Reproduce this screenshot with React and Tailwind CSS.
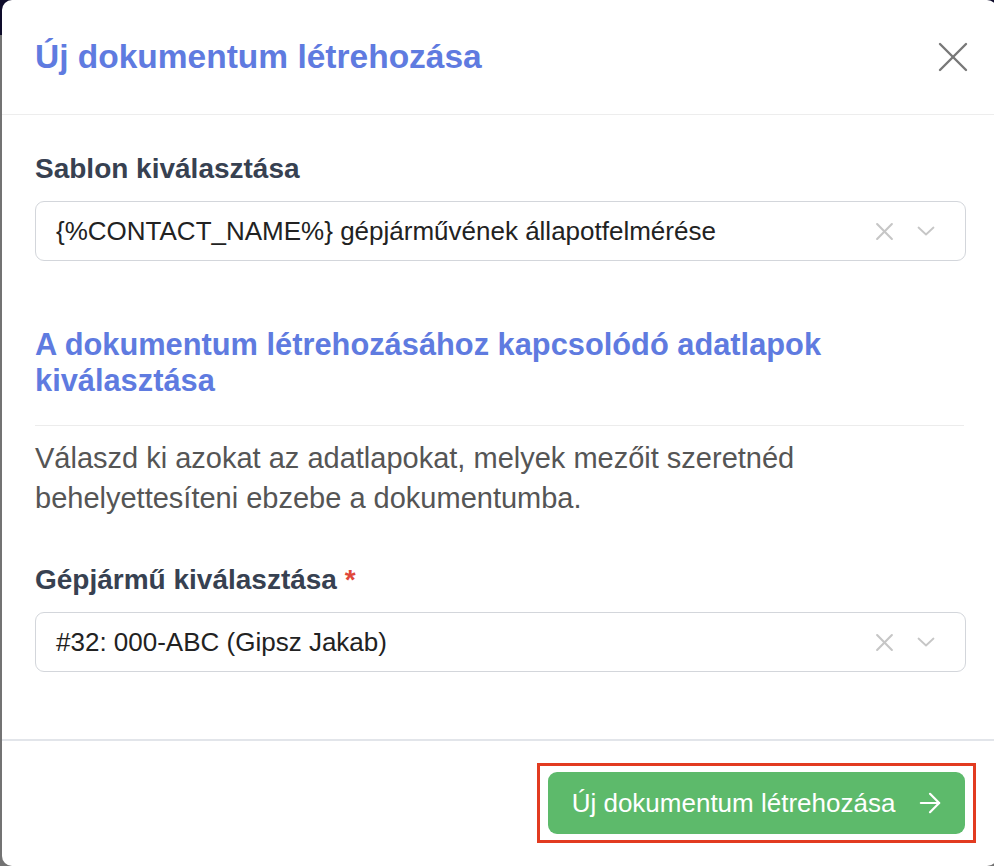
import React from "react";

const font = { fontFamily: '"Liberation Sans", Arial, sans-serif' };

function CloseIcon({ className }) {
  return (
    <svg viewBox="0 0 30 30" className={className} fill="none" stroke="currentColor" strokeWidth="2.4" strokeLinecap="round">
      <line x1="2" y1="2" x2="28" y2="28" />
      <line x1="28" y1="2" x2="2" y2="28" />
    </svg>
  );
}

function ClearIcon() {
  return (
    <svg viewBox="0 0 18 18" className="w-[19px] h-[19px] text-[#c6c6c6]" fill="none" stroke="currentColor" strokeWidth="2" strokeLinecap="round">
      <line x1="2" y1="2" x2="16" y2="16" />
      <line x1="16" y1="2" x2="2" y2="16" />
    </svg>
  );
}

function ChevronIcon() {
  return (
    <svg viewBox="0 0 18 10" className="w-[18px] h-[10px] text-[#c6c6c6]" fill="none" stroke="currentColor" strokeWidth="1.8" strokeLinecap="round" strokeLinejoin="round">
      <polyline points="1.5,1.5 9,8.5 16.5,1.5" />
    </svg>
  );
}

function ArrowIcon() {
  return (
    <svg viewBox="0 0 24 24" className="w-[22px] h-[22px]" fill="none" stroke="currentColor" strokeWidth="2.4" strokeLinecap="round" strokeLinejoin="round">
      <line x1="2" y1="12" x2="22" y2="12" />
      <polyline points="12,2 22,12 12,22" />
    </svg>
  );
}

function Select({ value }) {
  return (
    <div className="h-[60px] rounded-[9px] border border-[#d3d6db] bg-white flex items-center pl-[20px] pr-[30px]">
      <span className="flex-1 text-[26px] text-[#222] leading-[32px] whitespace-nowrap">{value}</span>
      <div className="flex items-center gap-[23px]">
        <ClearIcon />
        <ChevronIcon />
      </div>
    </div>
  );
}

export default function App() {
  return (
    <div
      className="w-[994px] h-[866px] overflow-hidden flex bg-[linear-gradient(to_bottom,#0e0c2b_35px,#737373_35px)]"
      style={font}
    >
      <div className="ml-[2px] w-[995px] shrink-0 h-full bg-white rounded-[10px] flex flex-col">
        {/* header */}
        <div className="h-[115px] shrink-0 flex items-center justify-between pl-[33px] pr-[29px] border-b border-[#ededed]">
          <h1 className="text-[33.5px] font-bold text-[#5f7be0] leading-none">Új dokumentum létrehozása</h1>
          <CloseIcon className="w-[30px] h-[30px] text-[#787878]" />
        </div>

        {/* body */}
        <div className="flex-1 flex flex-col px-[33px] pt-[36px]">
          <label className="text-[28px] font-bold text-[#374151] leading-[36px]">Sablon kiválasztása</label>
          <div className="mt-[14px] mr-[-2px]">
            <Select value="{%CONTACT_NAME%} gépjárművének állapotfelmérése" />
          </div>

          <h2 className="mt-[66px] text-[30.8px] font-bold text-[#5f7be0] leading-[36px]">
            A dokumentum létrehozásához kapcsolódó adatlapok kiválasztása
          </h2>
          <div className="mt-[26px] h-px bg-[#ececec]" />
          <p className="mt-[12px] text-[29px] text-[#555] leading-[40px]">
            Válaszd ki azokat az adatlapokat, melyek mezőit szeretnéd behelyettesíteni ebzebe a dokumentumba.
          </p>

          <label className="mt-[44px] text-[28px] font-bold text-[#374151] leading-[36px]">
            Gépjármű kiválasztása <span className="text-[#e0483a]">*</span>
          </label>
          <div className="mt-[14px] mr-[-2px]">
            <Select value="#32: 000-ABC (Gipsz Jakab)" />
          </div>
        </div>

        {/* footer */}
        <div className="h-[127px] shrink-0 border-t-2 border-[#e2e5ea] flex justify-end items-start pt-[22px] pr-[21px]">
          <div className="border-[3px] border-[#e23b20] px-[8px] py-[6px]">
            <button className="h-[62px] w-[417px] rounded-[9px] bg-[#5dba6b] text-white flex items-center justify-center gap-[24px] text-[26px]">
              <span>Új dokumentum létrehozása</span>
              <ArrowIcon />
            </button>
          </div>
        </div>
      </div>
    </div>
  );
}
